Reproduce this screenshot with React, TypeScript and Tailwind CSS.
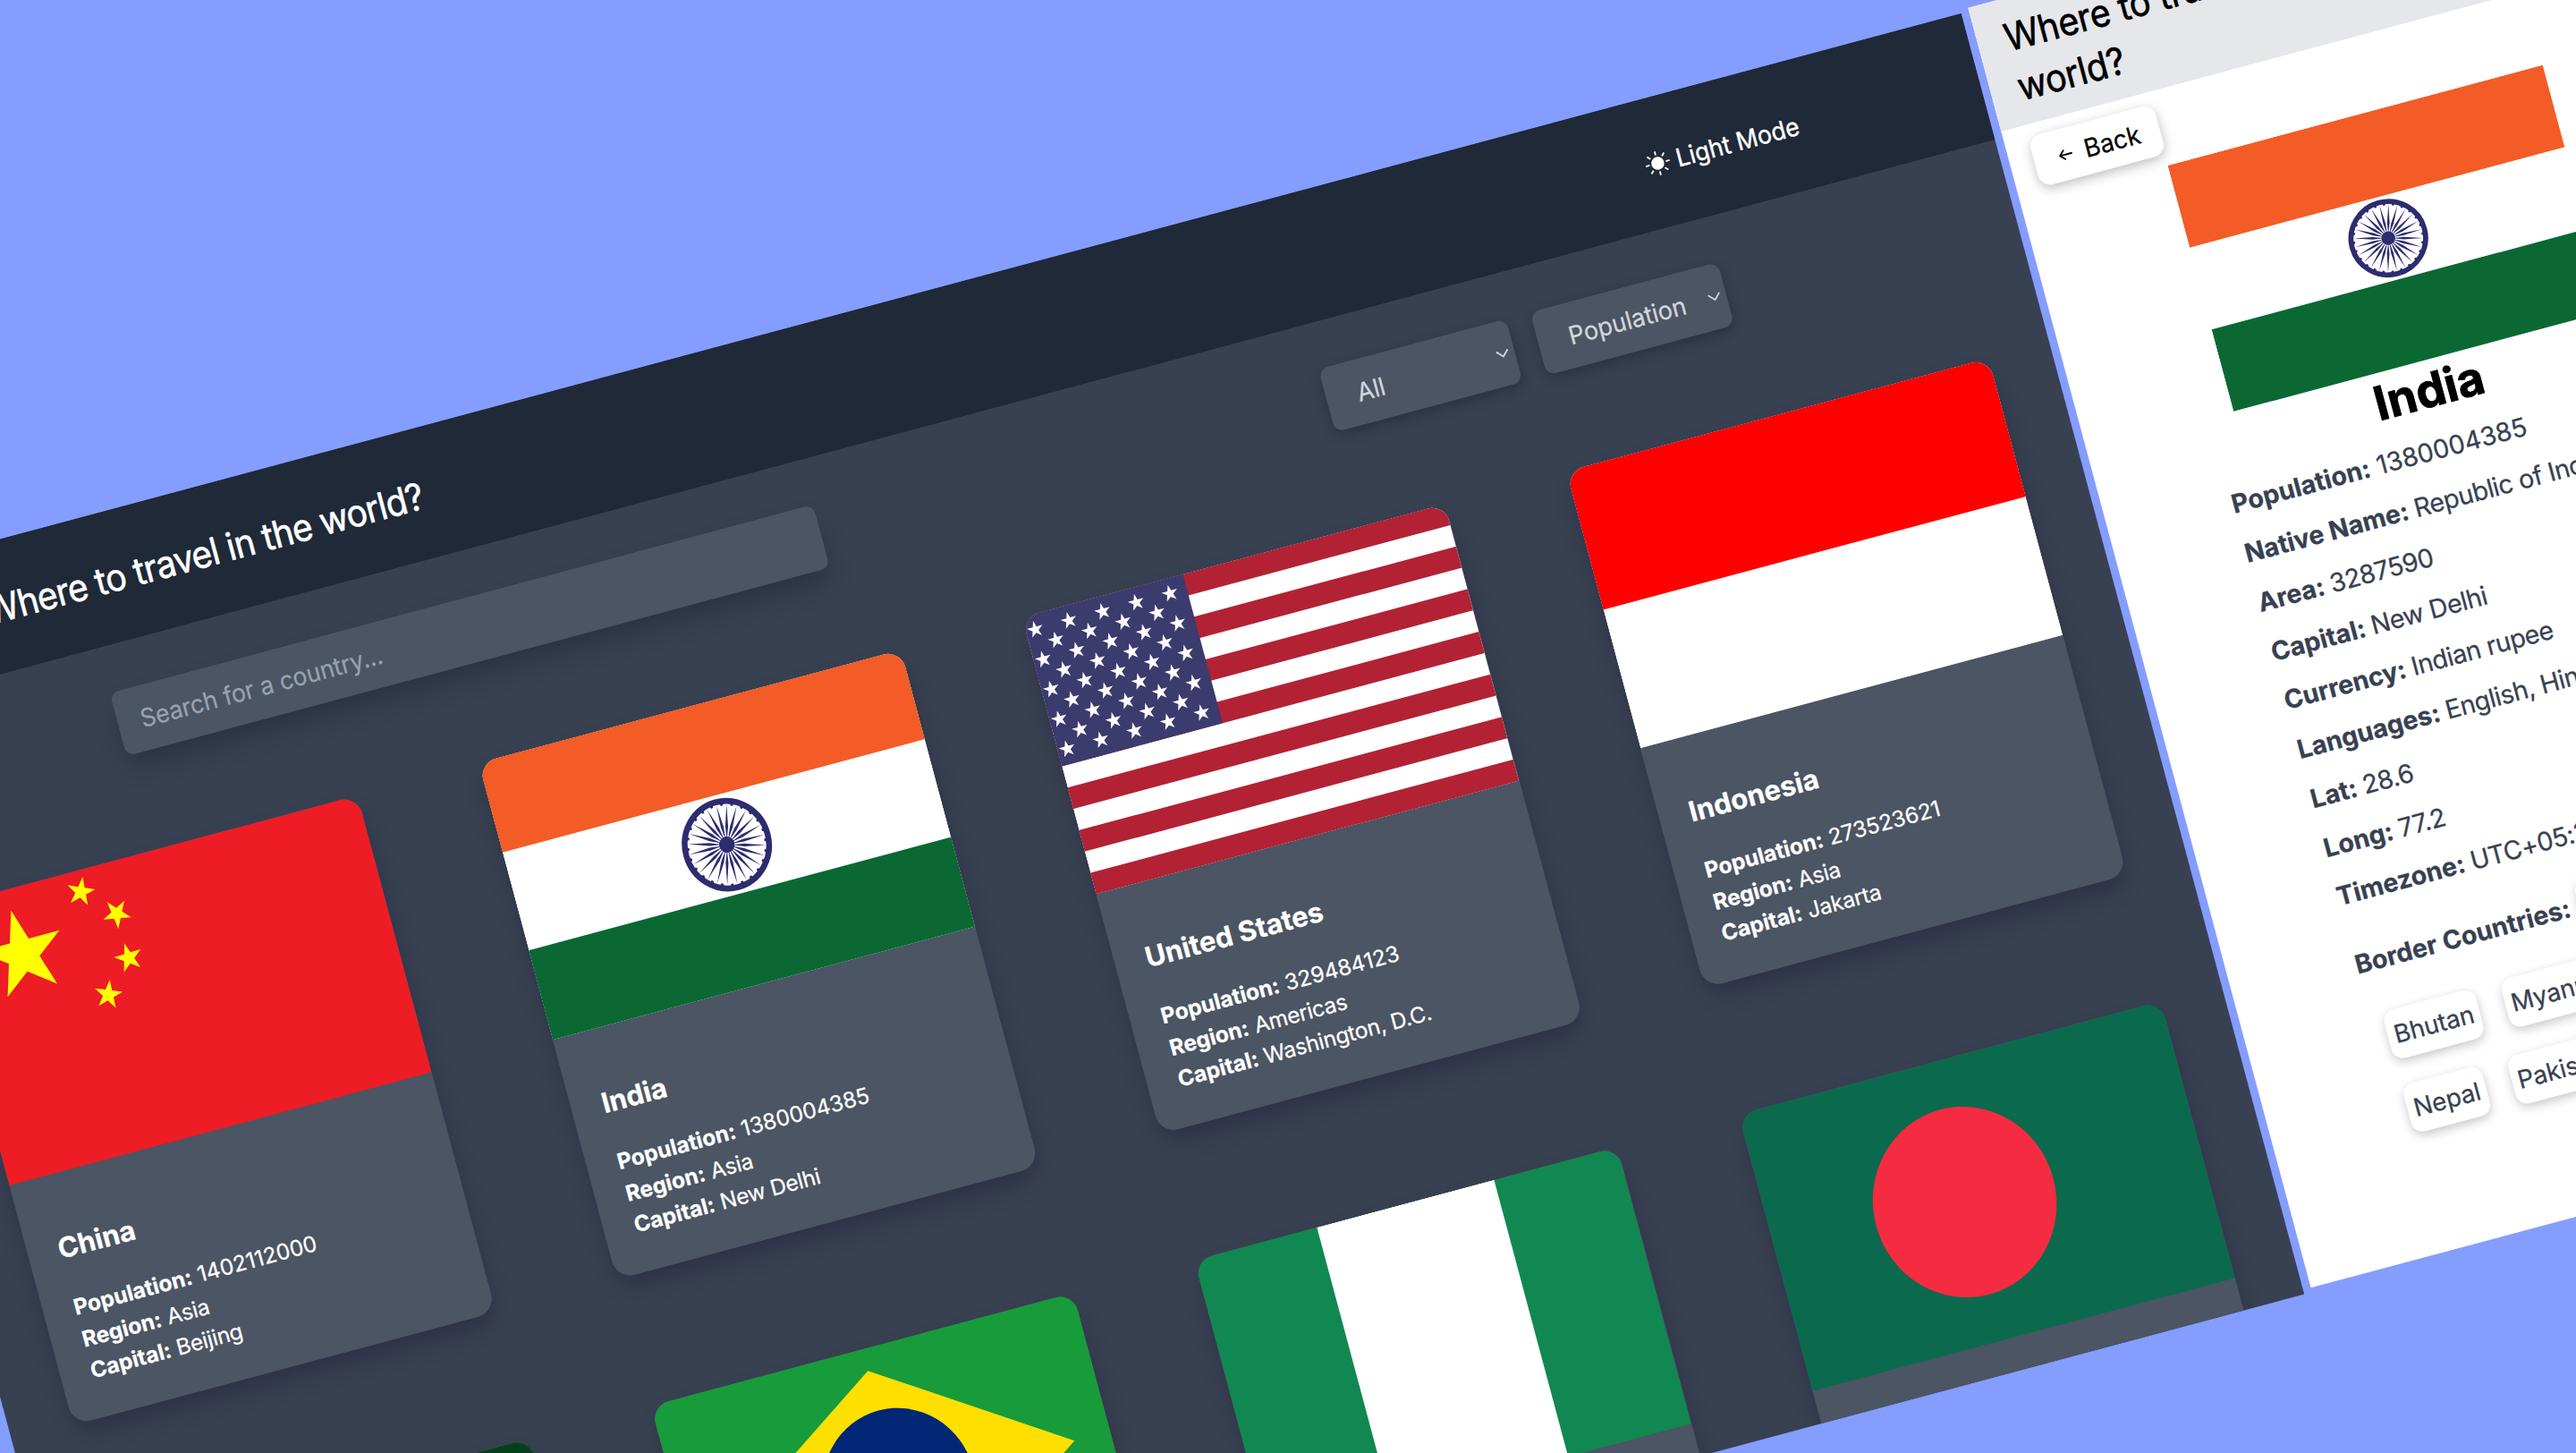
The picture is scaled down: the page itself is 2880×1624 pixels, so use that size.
import React from "react";

function starPoints(cx: number, cy: number, r: number, deg = 0) {
  const pts: string[] = [];
  for (let i = 0; i < 10; i++) {
    const rad = i % 2 === 0 ? r : r * 0.382;
    const a = ((deg - 90 + i * 36) * Math.PI) / 180;
    pts.push(`${(cx + rad * Math.cos(a)).toFixed(2)},${(cy + rad * Math.sin(a)).toFixed(2)}`);
  }
  return pts.join(" ");
}

function China() {
  const toBig = (x: number, y: number) => (Math.atan2(5 - y, 5 - x) * 180) / Math.PI + 90;
  const small: [number, number][] = [
    [9.95, 2],
    [11.95, 4],
    [11.95, 7],
    [9.95, 9],
  ];
  return (
    <>
      <rect width="30" height="20" fill="#ee1c25" />
      <polygon points={starPoints(5, 5, 3)} fill="#ffff00" />
      {small.map(([x, y]) => (
        <polygon key={`${x}-${y}`} points={starPoints(x, y, 1, toBig(x, y))} fill="#ffff00" />
      ))}
    </>
  );
}

function India() {
  const spokes = Array.from({ length: 24 }, (_, i) => i * 15);
  return (
    <>
      <rect width="900" height="600" fill="#ffffff" />
      <rect width="900" height="200" fill="#f35c26" />
      <rect y="400" width="900" height="200" fill="#0b6833" />
      <g transform="translate(450 300)" fill="#2d2c6f">
        <circle r="86.5" fill="none" stroke="#2d2c6f" strokeWidth="12" />
        <circle r="16" />
        {spokes.map((d) => (
          <g key={d} transform={`rotate(${d})`}>
            <polygon points="0,-10 2.9,-36 0,-80 -2.9,-36" />
            <circle cx="0" cy="-80.5" r="3.2" transform="rotate(7.5)" />
          </g>
        ))}
      </g>
    </>
  );
}

function UnitedStates() {
  const stripe = 1000 / 13;
  const stars: [number, number][] = [];
  for (let row = 0; row < 9; row++) {
    const n = row % 2 === 0 ? 6 : 5;
    for (let i = 0; i < n; i++) {
      stars.push([(row % 2 === 0 ? 1 : 2) * 63.33 + i * 126.67, 53.85 * (row + 1)]);
    }
  }
  return (
    <>
      <rect width="1900" height="1000" fill="#ffffff" />
      {[0, 2, 4, 6, 8, 10, 12].map((i) => (
        <rect key={i} y={i * stripe} width="1900" height={stripe} fill="#b22234" />
      ))}
      <rect width="760" height={stripe * 7} fill="#3c3b6e" />
      {stars.map(([x, y]) => (
        <polygon key={`${x}-${y}`} points={starPoints(x, y, 30.8)} fill="#ffffff" />
      ))}
    </>
  );
}

function Indonesia() {
  return (
    <>
      <rect width="30" height="20" fill="#ffffff" />
      <rect width="30" height="10" fill="#ff0000" />
    </>
  );
}

function Pakistan() {
  return (
    <>
      <rect width="30" height="20" fill="#05401c" />
      <rect width="7.5" height="20" fill="#ffffff" />
      <circle cx="18.75" cy="10" r="6" fill="#ffffff" />
      <circle cx="20.1" cy="8.8" r="5.5" fill="#05401c" />
      <polygon points={starPoints(22, 6.8, 2, 50)} fill="#ffffff" />
    </>
  );
}

function Brazil() {
  return (
    <>
      <defs>
        <clipPath id="globe">
          <circle cx="10" cy="7" r="3.5" />
        </clipPath>
      </defs>
      <rect width="20" height="14" fill="#189b3b" />
      <polygon points="10,1.7 18.3,7 10,12.3 1.7,7" fill="#fedf00" />
      <circle cx="10" cy="7" r="3.5" fill="#022776" />
      <circle cx="8" cy="14" r="8.25" fill="none" stroke="#ffffff" strokeWidth="0.5" clipPath="url(#globe)" />
    </>
  );
}

function Nigeria() {
  return (
    <>
      <rect width="6" height="3" fill="#118851" />
      <rect x="2" width="2" height="3" fill="#ffffff" />
    </>
  );
}

function Bangladesh() {
  return (
    <>
      <rect width="10" height="6" fill="#0b6a4d" />
      <circle cx="4.5" cy="3" r="2" fill="#f52b41" />
    </>
  );
}

type Country = {
  name: string;
  population: string;
  region: string;
  capital: string;
  viewBox: string;
  Flag: () => React.ReactElement;
};

const countries: Country[] = [
  { name: "China", population: "1402112000", region: "Asia", capital: "Beijing", viewBox: "0 0 30 20", Flag: China },
  { name: "India", population: "1380004385", region: "Asia", capital: "New Delhi", viewBox: "0 0 900 600", Flag: India },
  { name: "United States", population: "329484123", region: "Americas", capital: "Washington, D.C.", viewBox: "0 0 1900 1000", Flag: UnitedStates },
  { name: "Indonesia", population: "273523621", region: "Asia", capital: "Jakarta", viewBox: "0 0 30 20", Flag: Indonesia },
  { name: "Pakistan", population: "220892331", region: "Asia", capital: "Islamabad", viewBox: "0 0 30 20", Flag: Pakistan },
  { name: "Brazil", population: "212559409", region: "Americas", capital: "Brasília", viewBox: "0 0 20 14", Flag: Brazil },
  { name: "Nigeria", population: "206139587", region: "Africa", capital: "Abuja", viewBox: "0 0 6 3", Flag: Nigeria },
  { name: "Bangladesh", population: "164689383", region: "Asia", capital: "Dhaka", viewBox: "0 0 10 6", Flag: Bangladesh },
];

function CountryCard({ name, population, region, capital, viewBox, Flag }: Country) {
  return (
    <article className="h-[598px] overflow-hidden rounded-[21px] bg-[#4b5563] text-white shadow-[0_14px_26px_-4px_rgba(17,8,50,0.3)]">
      <svg className="block h-[320.5px] w-full" viewBox="0 0 510 320.5" preserveAspectRatio="none">
        <svg width="510" height="320.5" viewBox={viewBox} preserveAspectRatio="xMidYMid slice">
          <Flag />
        </svg>
      </svg>
      <div className="px-[34.8px] pt-[59.5px]">
        <h2 className="text-[31.2px] leading-[49px] font-bold">{name}</h2>
        <div className="mt-6 text-[24.5px] leading-[36.5px]">
          <p><b>Population:</b> {population}</p>
          <p><b>Region:</b> <span className="tracking-[-0.3px]">{region}</span></p>
          <p><b>Capital:</b> <span className="tracking-[-0.3px]">{capital}</span></p>
        </div>
      </div>
    </article>
  );
}

function Select({ label }: { label: string }) {
  return (
    <div className="flex h-[72.5px] w-[217px] items-center justify-between rounded-[11px] bg-[#4b5563] pr-[6px] pl-[35px] text-[28px] text-gray-300 shadow-[0_5px_14px_rgba(15,20,35,0.32)]">
      <span className="origin-left scale-x-[0.965]">{label}</span>
      <svg width="15" height="10" viewBox="0 0 15 10" fill="none" stroke="#d1d5db" strokeWidth="1.8">
        <path d="M1 1.2 7.5 8 14 1.2" />
      </svg>
    </div>
  );
}

function SunIcon() {
  return (
    <svg className="ml-[2px]" width="28" height="28" viewBox="-14 -14 28 28" fill="#ffffff" stroke="#ffffff" strokeWidth="1.8">
      <circle r="7.2" stroke="none" />
      {[0, 45, 90, 135, 180, 225, 270, 315].map((d) => (
        <path key={d} d="M0 -9.3V-13.8" transform={`rotate(${d})`} />
      ))}
    </svg>
  );
}

function DarkHome() {
  return (
    <section className="mt-[4px] h-[1481.7px] w-[2518.6px] shrink-0 overflow-hidden bg-[#384151]">
      <header className="flex h-[146px] items-center justify-between bg-[#1f2937] pt-[2px] pr-[208px] pl-[211px] text-white">
        <h1 className="origin-left scale-x-[0.93] text-[42px] tracking-[-0.85px] whitespace-nowrap [-webkit-text-stroke:0.6px]">Where to travel in the world?</h1>
        <button className="flex items-center text-[28px]">
          <SunIcon />
          <span className="origin-right scale-x-[0.95] [-webkit-text-stroke:0.4px]">Light Mode</span>
        </button>
      </header>
      <div className="mt-[52px] flex items-center justify-between pr-[335px] pl-[322px]">
        <div className="flex h-[72.5px] w-[814.5px] items-center rounded-[10px] bg-[#4b5563] pl-[26.5px] text-[28px] text-gray-400 shadow-[0_16px_28px_-4px_rgba(15,20,35,0.32)]">
          <span className="origin-left scale-x-[0.95]">Search for a country...</span>
        </div>
        <div className="flex gap-[28.5px]">
          <Select label="All" />
          <Select label="Population" />
        </div>
      </div>
      <main className="mt-[109.5px] grid grid-cols-4 gap-x-[140px] gap-y-[146px] pr-[70.5px] pl-[71px]">
        {countries.map((c) => (
          <CountryCard key={c.name} {...c} />
        ))}
      </main>
    </section>
  );
}

const numericFacts: [string, string][] = [["Population", "1380004385"]];

const facts: [string, string][] = [
  ["Native Name", "Republic of India"],
  ["Area", "3287590"],
  ["Capital", "New Delhi"],
  ["Currency", "Indian rupee"],
  ["Languages", "English, Hindi, Tamil"],
  ["Lat", "28.6"],
  ["Long", "77.2"],
  ["Timezone", "UTC+05:30"],
];

function Pill({ children }: { children: React.ReactNode }) {
  return (
    <span className="flex h-[56.5px] items-center rounded-[13px] bg-white px-[7px] text-[27.8px] shadow-[0_4px_12px_rgba(0,0,0,0.22)]">
      {children}
    </span>
  );
}

function LightDetail() {
  return (
    <section className="h-[1480.5px] w-[774px] shrink-0 overflow-hidden bg-white text-black">
      <header className="flex h-[142.5px] items-center justify-between bg-[#e5e7eb] pt-[2px] pr-[28px] pl-[31.5px]">
        <h1 className="w-[480px] origin-left scale-x-[0.93] text-[42.5px] leading-[56.5px] tracking-[-0.4px] [-webkit-text-stroke:0.6px]">Where to travel in the world?</h1>
        <span className="text-[27.6px]">Dark Mode</span>
      </header>
      <button className="mt-[14px] ml-[27px] flex h-[58.5px] w-[145px] items-center rounded-[14px] bg-white pl-[28px] text-[28.3px] shadow-[0_4px_13px_rgba(0,0,0,0.25)]">
        <svg width="16" height="13" viewBox="0 0 16 13" fill="none" stroke="#000000" strokeWidth="1.9" strokeLinejoin="round">
          <path d="M15.5 6.5H1.5M7 1 1.5 6.5 7 12" />
        </svg>
        <span className="ml-[14px] origin-left scale-x-[0.97]">Back</span>
      </button>
      <svg className="mx-auto mt-[13px] block h-[284.5px] w-[434.5px]" viewBox="0 0 900 600" preserveAspectRatio="none">
        <India />
      </svg>
      <h2 className="mt-px pl-px text-center text-[52.5px] leading-[64px] font-bold [-webkit-text-stroke:0.9px]">India</h2>
      <div className="mt-[7.5px] pl-[141.5px] text-[28.7px] leading-[56.75px] whitespace-nowrap text-[#374151]">
        {numericFacts.map(([k, v]) => (
          <p key={k}><b>{k}:</b> {v}</p>
        ))}
        {facts.map(([k, v]) => (
          <p key={k}><b>{k}:</b> <span className="-ml-px tracking-[-0.5px]">{v}</span></p>
        ))}
        <div className="mt-[22px] flex items-center gap-[10px]">
          <b>Border Countries:</b>
          <Pill>Bangladesh</Pill>
        </div>
        <div className="mt-[29px] ml-[15px] flex w-[420px] flex-wrap gap-x-[30px] gap-y-[28.5px] tracking-[-0.1px]">
          <Pill>Bhutan</Pill>
          <Pill>Myanmar</Pill>
          <Pill>China</Pill>
          <Pill>Nepal</Pill>
          <Pill>Pakistan</Pill>
        </div>
      </div>
    </section>
  );
}

export default function App() {
  return (
    <div className="h-[1624px] w-[2880px] overflow-hidden bg-[#859dff] font-['Inter',sans-serif] [-webkit-text-stroke:0.25px]">
      <div className="origin-top-left -rotate-[15deg]">
        <div className="-ml-[404.3px] flex w-[3400px] items-start gap-[8.5px] pt-[578.3px]">
          <DarkHome />
          <LightDetail />
        </div>
      </div>
    </div>
  );
}
